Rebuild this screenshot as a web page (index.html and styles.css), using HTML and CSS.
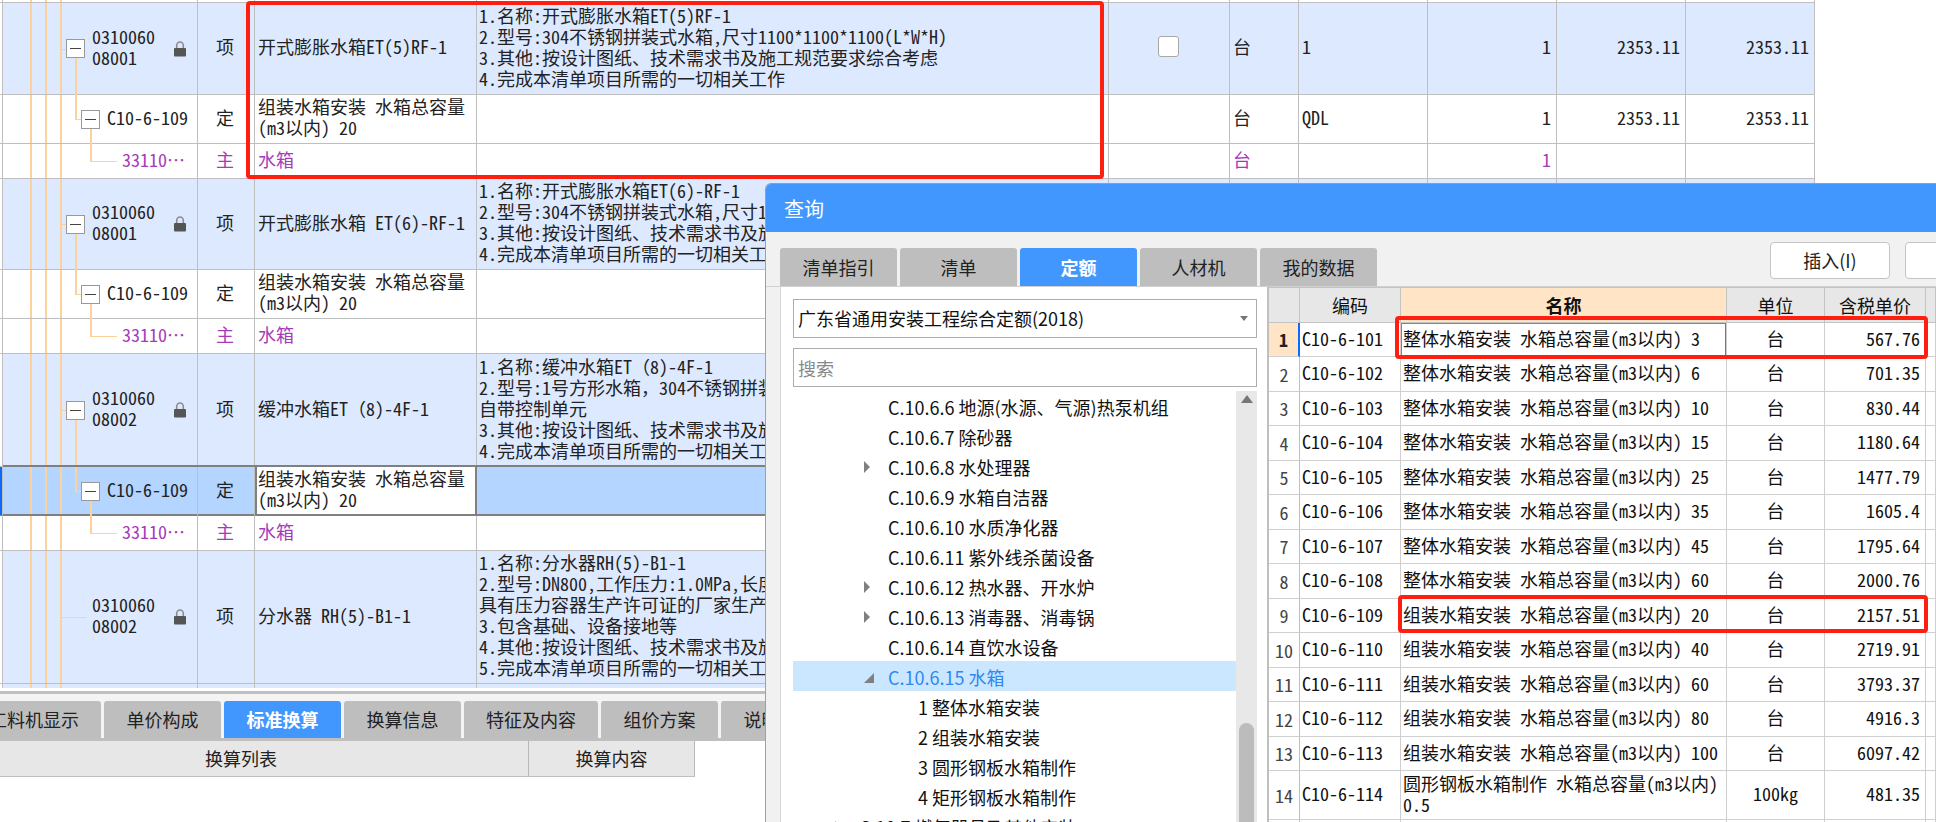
FILE: index.html
```
<!DOCTYPE html>
<html lang="zh-CN">
<head>
<meta charset="utf-8">
<title>查询</title>
<link rel="stylesheet" href="styles.css">
</head>
<body>
<svg width="0" height="0" class="defs" aria-hidden="true">
  <symbol id="lock" viewBox="0 0 12 16"><path d="M2.7 7V4.6a3.3 3.6 0 0 1 6.6 0V7" fill="none" stroke="#8c8c8c" stroke-width="1.6"/><rect x="0" y="7" width="12" height="8.5" rx="1" fill="#555"/></symbol>
</svg>
<main class="desk">
  <section class="bill">
    <table class="grid">
      <colgroup><col class="w-gut"><col class="w-code"><col class="w-kind"><col class="w-name"><col class="w-feat"><col class="w-chk"><col class="w-unit"><col class="w-num"><col class="w-num"><col class="w-num"><col class="w-num"></colgroup>
      <tbody>
        <tr class="edge"><td></td><td class="code"></td><td></td><td></td><td></td><td></td><td></td><td></td><td></td><td></td><td></td></tr>
        <tr class="item h92"><td></td><td class="code l1"><div><button class="fold" aria-label="折叠"></button><span>0310060<br>08001</span><svg class="lock"><use href="#lock"/></svg></div></td><td class="kind">项</td><td>开式膨胀水箱ET(5)RF-1</td><td class="feat">1.名称:开式膨胀水箱ET(5)RF-1<br>2.型号:304不锈钢拼装式水箱,尺寸1100*1100*1100(L*W*H)<br>3.其他:按设计图纸、技术需求书及施工规范要求综合考虑<br>4.完成本清单项目所需的一切相关工作</td><td class="kind"><input type="checkbox" aria-label="选择"></td><td>台</td><td>1</td><td class="num">1</td><td class="num">2353.11</td><td class="num">2353.11</td></tr>
        <tr class="h49"><td></td><td class="code l2"><div><button class="fold" aria-label="折叠"></button><span>C10-6-109</span></div></td><td class="kind">定</td><td>组装水箱安装 水箱总容量(m3以内) 20</td><td></td><td></td><td>台</td><td>QDL</td><td class="num">1</td><td class="num">2353.11</td><td class="num">2353.11</td></tr>
        <tr class="main h35"><td></td><td class="code l3"><div><span>33110…</span></div></td><td class="kind">主</td><td>水箱</td><td></td><td></td><td>台</td><td></td><td class="num">1</td><td></td><td></td></tr>
        <tr class="item h91"><td></td><td class="code l1"><div><button class="fold" aria-label="折叠"></button><span>0310060<br>08001</span><svg class="lock"><use href="#lock"/></svg></div></td><td class="kind">项</td><td>开式膨胀水箱 ET(6)-RF-1</td><td class="feat">1.名称:开式膨胀水箱ET(6)-RF-1<br>2.型号:304不锈钢拼装式水箱,尺寸1<br>3.其他:按设计图纸、技术需求书及施<br>4.完成本清单项目所需的一切相关工</td><td></td><td></td><td></td><td></td><td></td><td></td></tr>
        <tr class="h49"><td></td><td class="code l2"><div><button class="fold" aria-label="折叠"></button><span>C10-6-109</span></div></td><td class="kind">定</td><td>组装水箱安装 水箱总容量(m3以内) 20</td><td></td><td></td><td></td><td></td><td></td><td></td><td></td></tr>
        <tr class="main h35"><td></td><td class="code l3"><div><span>33110…</span></div></td><td class="kind">主</td><td>水箱</td><td></td><td></td><td></td><td></td><td></td><td></td><td></td></tr>
        <tr class="item h113"><td></td><td class="code l1"><div><button class="fold" aria-label="折叠"></button><span>0310060<br>08002</span><svg class="lock"><use href="#lock"/></svg></div></td><td class="kind">项</td><td>缓冲水箱ET（8)-4F-1</td><td class="feat">1.名称:缓冲水箱ET（8)-4F-1<br>2.型号:1号方形水箱，304不锈钢拼装<br>自带控制单元<br>3.其他:按设计图纸、技术需求书及施<br>4.完成本清单项目所需的一切相关工</td><td></td><td></td><td></td><td></td><td></td><td></td></tr>
        <tr class="current h49"><td></td><td class="code l2"><div><button class="fold" aria-label="折叠"></button><span>C10-6-109</span></div></td><td class="kind">定</td><td class="editing">组装水箱安装 水箱总容量(m3以内) 20</td><td></td><td></td><td></td><td></td><td></td><td></td><td></td></tr>
        <tr class="main h35"><td></td><td class="code l3"><div><span>33110…</span></div></td><td class="kind">主</td><td>水箱</td><td></td><td></td><td></td><td></td><td></td><td></td><td></td></tr>
        <tr class="item h133"><td></td><td class="code leaf"><div><span>0310060<br>08002</span><svg class="lock"><use href="#lock"/></svg></div></td><td class="kind">项</td><td>分水器 RH(5)-B1-1</td><td class="feat">1.名称:分水器RH(5)-B1-1<br>2.型号:DN800,工作压力:1.0MPa,长度<br>具有压力容器生产许可证的厂家生产<br>3.包含基础、设备接地等<br>4.其他:按设计图纸、技术需求书及施<br>5.完成本清单项目所需的一切相关工</td><td></td><td></td><td></td><td></td><td></td><td></td></tr>
        <tr class="item edge last"><td></td><td class="code"></td><td></td><td></td><td></td><td></td><td></td><td></td><td></td><td></td><td></td></tr>
      </tbody>
    </table>
    <div class="mark mark-bill"></div>
  </section>

  <section class="detail">
    <nav class="tabs detail-tabs"><button>工料机显示</button><button>单价构成</button><button class="on">标准换算</button><button>换算信息</button><button>特征及内容</button><button>组价方案</button><button>说明信息</button></nav>
    <table class="convert"><thead><tr><th class="list">换算列表</th><th class="content">换算内容</th></tr></thead></table>
  </section>

  <section class="dialog" role="dialog" aria-labelledby="dlg-title">
    <h1 id="dlg-title">查询</h1>
    <div class="bar">
      <nav class="tabs"><button>清单指引</button><button>清单</button><button class="on">定额</button><button>人材机</button><button>我的数据</button></nav>
      <div class="actions"><button>插入(I)</button><button>替换(R)</button></div>
    </div>
    <div class="body">
      <div class="side">
        <div class="pick">
          <select aria-label="定额库"><option>广东省通用安装工程综合定额(2018)</option></select>
          <svg class="caret" viewBox="0 0 8 5"><path d="M0 0h8L4 5z" fill="#777"/></svg>
        </div>
        <input class="search" type="text" placeholder="搜索" aria-label="搜索">
        <div class="treebox">
          <ul class="tree">
            <li>C.10.6.6 地源(水源、气源)热泵机组</li>
            <li>C.10.6.7 除砂器</li>
            <li class="closed">C.10.6.8 水处理器</li>
            <li>C.10.6.9 水箱自洁器</li>
            <li>C.10.6.10 水质净化器</li>
            <li>C.10.6.11 紫外线杀菌设备</li>
            <li class="closed">C.10.6.12 热水器、开水炉</li>
            <li class="closed">C.10.6.13 消毒器、消毒锅</li>
            <li>C.10.6.14 直饮水设备</li>
            <li class="open">C.10.6.15 水箱</li>
            <li class="sub">1 整体水箱安装</li>
            <li class="sub">2 组装水箱安装</li>
            <li class="sub">3 圆形钢板水箱制作</li>
            <li class="sub">4 矩形钢板水箱制作</li>
            <li class="up closed">C.10.7 燃气器具及其他安装</li>
          </ul>
          <div class="scroll"><svg viewBox="0 0 12 8"><path d="M0 8L6 0l6 8z" fill="#777"/></svg><div class="thumb"></div></div>
        </div>
      </div>
      <div class="quota">
        <table>
          <colgroup><col class="q-no"><col class="q-code"><col><col class="q-unit"><col class="q-price"><col class="q-more"></colgroup>
          <thead><tr><th></th><th>编码</th><th class="sorted">名称</th><th>单位</th><th>含税单价</th><th></th></tr></thead>
          <tbody>
            <tr class="sel"><td>1</td><td>C10-6-101</td><td>整体水箱安装 水箱总容量(m3以内) 3</td><td>台</td><td>567.76</td><td></td></tr>
            <tr><td>2</td><td>C10-6-102</td><td>整体水箱安装 水箱总容量(m3以内) 6</td><td>台</td><td>701.35</td><td></td></tr>
            <tr><td>3</td><td>C10-6-103</td><td>整体水箱安装 水箱总容量(m3以内) 10</td><td>台</td><td>830.44</td><td></td></tr>
            <tr><td>4</td><td>C10-6-104</td><td>整体水箱安装 水箱总容量(m3以内) 15</td><td>台</td><td>1180.64</td><td></td></tr>
            <tr><td>5</td><td>C10-6-105</td><td>整体水箱安装 水箱总容量(m3以内) 25</td><td>台</td><td>1477.79</td><td></td></tr>
            <tr><td>6</td><td>C10-6-106</td><td>整体水箱安装 水箱总容量(m3以内) 35</td><td>台</td><td>1605.4</td><td></td></tr>
            <tr><td>7</td><td>C10-6-107</td><td>整体水箱安装 水箱总容量(m3以内) 45</td><td>台</td><td>1795.64</td><td></td></tr>
            <tr><td>8</td><td>C10-6-108</td><td>整体水箱安装 水箱总容量(m3以内) 60</td><td>台</td><td>2000.76</td><td></td></tr>
            <tr><td>9</td><td>C10-6-109</td><td>组装水箱安装 水箱总容量(m3以内) 20</td><td>台</td><td>2157.51</td><td></td></tr>
            <tr><td>10</td><td>C10-6-110</td><td>组装水箱安装 水箱总容量(m3以内) 40</td><td>台</td><td>2719.91</td><td></td></tr>
            <tr><td>11</td><td>C10-6-111</td><td>组装水箱安装 水箱总容量(m3以内) 60</td><td>台</td><td>3793.37</td><td></td></tr>
            <tr><td>12</td><td>C10-6-112</td><td>组装水箱安装 水箱总容量(m3以内) 80</td><td>台</td><td>4916.3</td><td></td></tr>
            <tr><td>13</td><td>C10-6-113</td><td>组装水箱安装 水箱总容量(m3以内) 100</td><td>台</td><td>6097.42</td><td></td></tr>
            <tr class="tall"><td>14</td><td>C10-6-114</td><td>圆形钢板水箱制作 水箱总容量(m3以内) 0.5</td><td>100kg</td><td>481.35</td><td></td></tr>
            <tr><td></td><td></td><td></td><td></td><td></td><td></td></tr>
          </tbody>
        </table>
        <div class="mark mark-first"></div>
        <div class="mark mark-ninth"></div>
      </div>
    </div>
  </section>
</main>
</body>
</html>
```

FILE: styles.css
```
* { box-sizing: border-box; }
body {
  margin: 0;
  background: #fff;
  color: #222;
  font: 18px/21px "Noto Sans CJK SC", sans-serif;
}
button, input, select { font: inherit; color: inherit; margin: 0; }
button { padding: 0; border: 0; }
.defs { position: absolute; }
.desk { position: relative; height: 100vh; overflow: hidden; }
table { border-collapse: separate; border-spacing: 0; table-layout: fixed; }
td, th { padding: 0; font-weight: normal; }

/* Bill of quantities */
.bill { position: relative; }
.grid { width: 1815px; font-family: "Noto Sans Mono CJK SC", "Liberation Mono", "Noto Sans CJK SC", monospace; }
.w-gut { width: 3px; }
.w-code { width: 195px; }
.w-kind { width: 57px; }
.w-name { width: 222px; }
.w-feat { width: 632px; }
.w-chk { width: 121px; }
.w-unit { width: 69px; }
.w-num { width: 129px; }
.grid td {
  padding: 0 2px 4px 3px;
  border-right: 1px solid #bfbfbf;
  border-bottom: 1px solid #bfbfbf;
  vertical-align: middle;
}
.grid td:first-child, .grid .edge td { padding: 0; }
.edge td { height: 3px; }
.grid .last td { border-bottom: 0; height: 4px; }
.h92 td { height: 92px; }
.h91 td { height: 91px; }
.h49 td { height: 49px; }
.h35 td { height: 35px; }
.h113 td { height: 113px; }
.h133 td { height: 133px; }
.item td:not(:first-child) { background-color: #dde9fe; }
.main { color: #a63bb8; }
.grid .kind { text-align: center; padding: 0 2px 4px 0; }
.grid .num { text-align: right; padding-right: 5px; }
.grid .feat { white-space: nowrap; overflow: hidden; padding-left: 2px; }
.grid input {
  appearance: none;
  display: block;
  width: 21px;
  height: 21px;
  margin: 0 auto;
  background: #fff;
  border: 1px solid #a8a8a8;
  border-radius: 3px;
}

/* Tree guides inside the code column */
.grid .code {
  position: relative;
  padding: 0;
  background-image: linear-gradient(#fcd29a, #fcd29a), linear-gradient(#fcd29a, #fcd29a), linear-gradient(#fcd29a, #fcd29a);
  background-size: 2px 100%;
  background-repeat: no-repeat;
  background-position: 27px 0, 42px 0, 57px 0;
}
.code div { display: flex; align-items: center; }
.code span { padding-bottom: 4px; }
.code .lock { width: 12px; height: 16px; margin-left: auto; margin-right: 11px; }
.l1 div { padding-left: 63px; gap: 7px; }
.l2 div { padding-left: 78px; gap: 7px; }
.l3 div { padding-left: 119px; }
.leaf div { padding-left: 89px; }
.fold {
  position: relative;
  z-index: 1;
  width: 19px;
  height: 19px;
  background: linear-gradient(#444, #444) center / 11px 1px no-repeat #fff;
  border: 1px solid #999;
}
.code::before, .code::after { content: ""; position: absolute; }
.l1::before { left: 59px; width: 4px; top: 50%; border-top: 1px solid #fcd29a; }
.l1::after { left: 72px; top: 50%; bottom: -1px; border-left: 2px solid #fcd29a; }
.l2::before { left: 72px; width: 6px; top: 0; height: 50%; border: solid #fcd29a; border-width: 0 0 1px 2px; }
.l2::after { left: 87px; top: 50%; bottom: -1px; border-left: 2px solid #fcd29a; }
.l3::before { left: 87px; width: 25px; top: 0; height: 50%; border: solid #fcd29a; border-width: 0 0 1px 2px; }
.leaf::before { left: 59px; width: 24px; top: 50%; border-top: 1px solid #fcd29a; }

.current td { background-color: #b3d5ff; box-shadow: 0 -2px #808080, inset 0 -1px #808080; border-bottom-color: #808080; }
.grid .current td:first-child { background: #0a6cff; box-shadow: none; }
.grid .current .editing { background: #fff; box-shadow: inset 2px 0 #808080, inset -1px 0 #808080, 0 -2px #808080, inset 0 -1px #808080; border-right-color: #808080; }

.mark { position: absolute; border: 4px solid #ff1f10; border-radius: 4px; pointer-events: none; }
.mark-bill { left: 246px; top: 1px; width: 858px; height: 178px; }

/* Tabs shared by both panels */
.tabs { display: flex; gap: 3px; }
.tabs button {
  min-width: 117px;
  height: 37px;
  padding: 0 22px;
  background: #bebebe;
  border-radius: 3px 3px 0 0;
  white-space: nowrap;
}
.tabs .on { background: #4297ff; color: #fff; font-weight: bold; }

.detail { margin-top: 3px; overflow: hidden; }
.detail-tabs { padding: 7px 0 0 0; margin-left: -33px; background: #f4f4f4; border-top: 3px solid #bfbfbf; border-bottom: 3px solid #bfbfbf; }
.convert { margin-left: -46px; }
.convert th { height: 36px; background: #e7e7e7; border-right: 1px solid #b8b8b8; border-bottom: 1px solid #bfbfbf; }
.convert .list { width: 575px; }
.convert .content { width: 166px; }

/* Query window */
.dialog {
  position: absolute;
  left: 765px;
  right: 0;
  top: 183px;
  bottom: 0;
  z-index: 2;
  display: flex;
  flex-direction: column;
  background: #f1f1f1;
  border-left: 1px solid #a0a0a0;
  border-top: 1px solid #8aa0bb;
  border-top-left-radius: 6px;
  overflow: hidden;
}
.dialog h1 {
  margin: 0;
  padding: 0 18px;
  background: #4297ff;
  color: #fff;
  font-size: 20px;
  line-height: 47px;
  padding-top: 1px;
  font-weight: normal;
}
.bar { display: flex; justify-content: space-between; padding-left: 14px; height: 54px; overflow: hidden; }
.bar .tabs { padding-top: 16px; flex: none; }
.bar .tabs button { height: 38px; }
.actions { display: flex; gap: 15px; padding-top: 10px; flex: none; margin-right: -89px; }
.actions button { width: 120px; height: 37px; background: #fff; border: 1px solid #c4c4c4; border-radius: 4px; }
.body { flex: 1; min-height: 0; display: flex; padding-left: 14px; border-top: 1px solid #d0d0d0; }
.side {
  width: 487px;
  flex: none;
  display: flex;
  flex-direction: column;
  padding: 12px 10px 0 12px;
  background: #fff;
  border-left: 1px solid #d8d8d8;
  color: #111;
}
.pick { position: relative; }
.side select, .search {
  display: block;
  width: 100%;
  height: 39px;
  padding: 0 4px;
  background: #fff;
  border: 1px solid #adadad;
  border-radius: 0;
}
.side select { appearance: none; }
.caret { position: absolute; right: 9px; top: 17px; width: 8px; height: 5px; }
.search { margin-top: 10px; }
.search::placeholder { color: #888; opacity: 1; }
.treebox { flex: 1; min-height: 0; display: flex; margin-top: 4px; overflow: hidden; }
.tree { flex: 1; margin: 0; padding: 0; list-style: none; overflow: hidden; }
.tree li { position: relative; height: 30px; padding-left: 95px; line-height: 32px; white-space: nowrap; }
.tree .sub { padding-left: 125px; }
.tree .up { padding-left: 66px; }
.tree .open { background: #cbe6ff; color: #2f88f0; }
.tree .closed::before, .tree .open::before { content: ""; position: absolute; left: 71px; top: 10px; border: solid transparent; }
.tree .closed::before { border-width: 6px 0 6px 6px; border-left-color: #808080; }
.tree .open::before { top: 12px; border-width: 0 0 10px 10px; border-bottom-color: #808080; }
.tree .up::before { left: 42px; }
.scroll { width: 21px; display: flex; flex-direction: column; align-items: center; background: #e8e8e8; }
.scroll svg { width: 12px; height: 8px; margin-top: 4px; }
.thumb { width: 15px; flex: 1; margin-top: 320px; background: #bcbcbc; border-radius: 8px 8px 0 0; }

.quota { position: relative; flex: 1; min-width: 0; }
.quota table { width: 100%; background: #fff; border-left: 2px solid #bfbfbf; color: #111; }
.q-no { width: 31px; }
.q-code { width: 101px; }
.q-unit { width: 98px; }
.q-price { width: 101px; }
.q-more { width: 10px; }
.quota th { height: 36px; background: #e7e7e7; border: solid #c4c4c4; border-width: 1px 1px 1px 0; }
.quota .sorted { background: #ffe5c6; font-weight: bold; }
.quota td {
  height: 34px;
  padding: 0 2px 3px 2px;
  border-right: 1px solid #cfcfcf;
  border-bottom: 1px solid #cfcfcf;
  font-family: "Noto Sans Mono CJK SC", "Liberation Mono", "Noto Sans CJK SC", monospace;
}
.quota tr:nth-child(even) td { height: 35px; }
.quota .tall td:nth-child(n) { height: 49px; }
.quota td:first-child { text-align: center; padding: 0; }
.quota td:nth-child(4) { text-align: center; padding: 0 0 3px; }
.quota td:first-child { color: #444; border-right-color: #bfbfbf; }
.quota td:nth-child(5) { text-align: right; padding-right: 5px; }
.quota .sel td:first-child { background: #ffe5c6; color: #222; font-weight: bold; border-right: 2px solid #0a6cff; }
.quota .sel td:nth-child(3) { box-shadow: inset 1px 1px #4a90e2, inset -1px 0 #777; }
.mark-first { left: 128px; right: 8px; top: 29px; height: 43px; }
.mark-ninth { left: 131px; right: 8px; top: 308px; height: 38px; }
```
